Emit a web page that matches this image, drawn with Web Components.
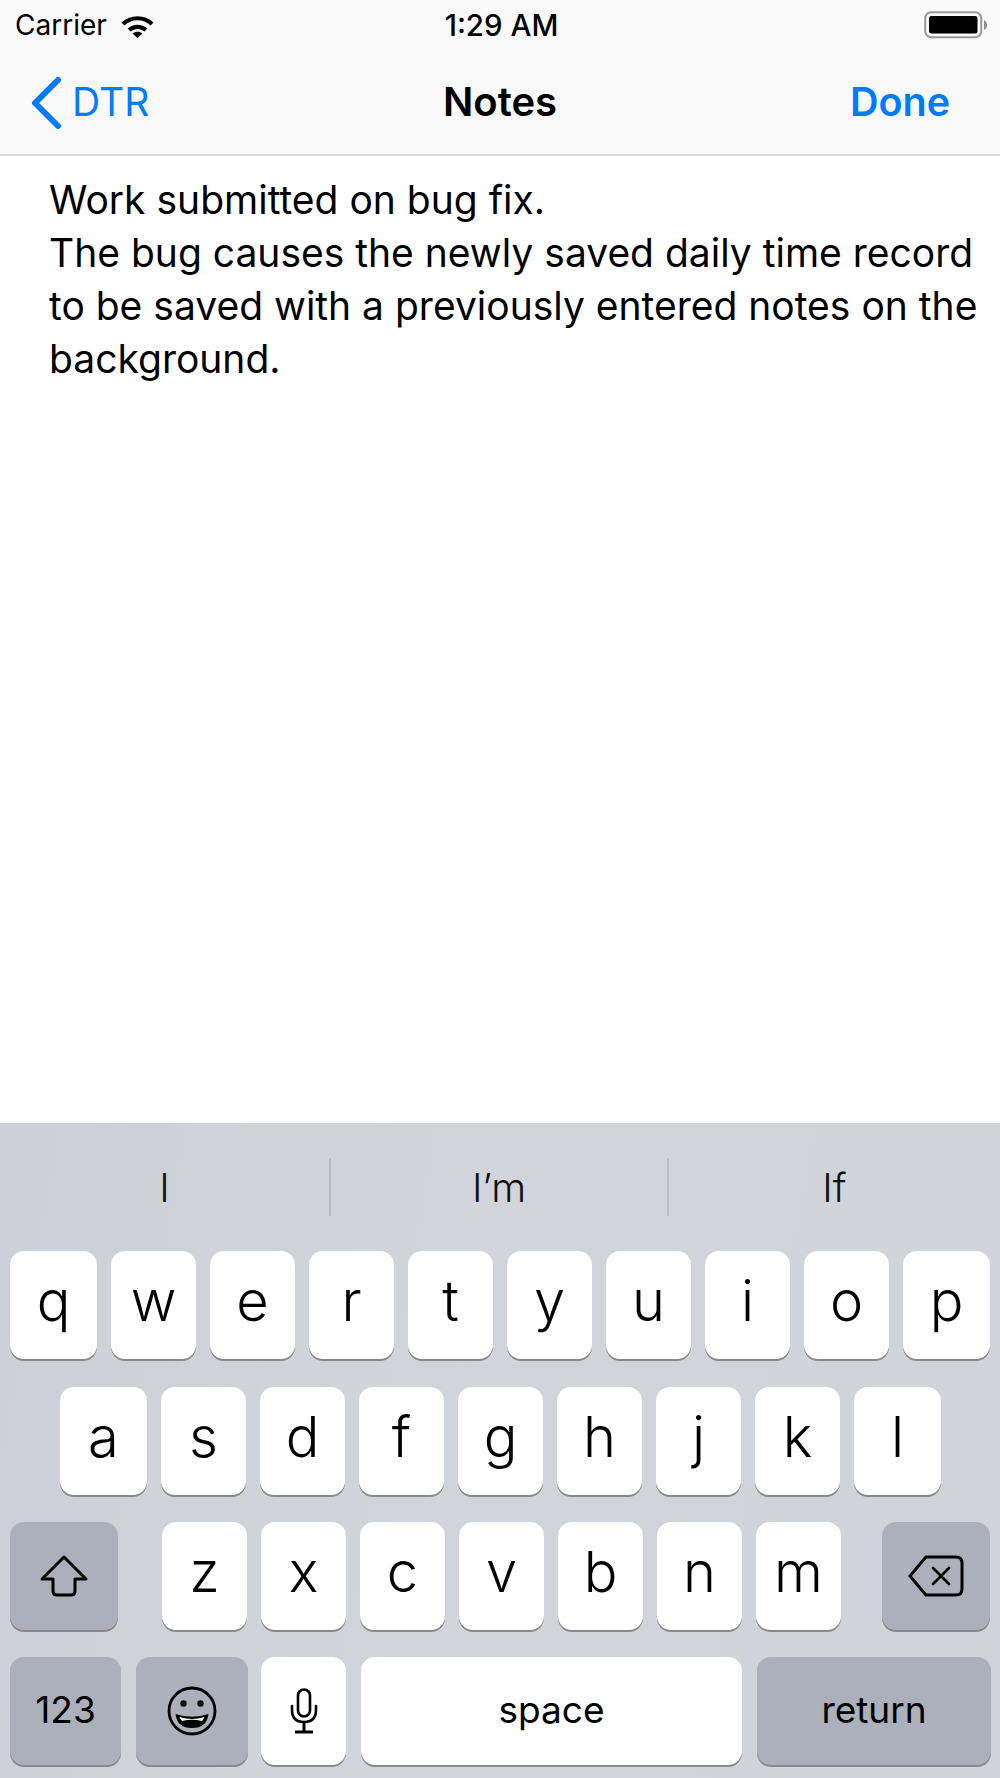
<!DOCTYPE html>
<html>
<head>
<meta charset="utf-8">
<title>Notes</title>
<style>
  html, body { margin: 0; padding: 0; background: #fff; }
  body { font-family: Inter, "Liberation Sans", sans-serif; color: #000; }
  notes-app { width: 1000px; height: 1778px; }
</style>
</head>
<body>
<notes-app>
  <ios-status-bar carrier="Carrier" time="1:29 AM"></ios-status-bar>
  <ios-nav-bar back="DTR" title="Notes" action="Done"></ios-nav-bar>
  <note-body>Work submitted on bug fix.<br>The bug causes the newly saved daily time record to be saved with a previously entered notes on the background.</note-body>
  <ios-keyboard></ios-keyboard>
</notes-app>

<script>
(function() {
  // small helper, every element gets an open shadow root with own css
  function define(name, css, html) {
    customElements.define(name, class extends HTMLElement {
      constructor() {
        super();
        this.attachShadow({ mode: 'open' });
        const body = typeof html === 'function' ? html(this) : html;
        this.shadowRoot.innerHTML = `<style>${css}</style>${body}`;
      }
    });
  }

  define('notes-app', `
    :host { display: flex; flex-direction: column; overflow: hidden; }
  `, `<slot></slot>`);

  define('ios-status-bar', `
    :host { display: block; height: 52px; background: #f9f9f9; }
    .bar { display: grid; grid-template-columns: 1fr auto 1fr; align-items: center; height: 50px; padding: 0 12px 0 15px; }
    .left { display: flex; align-items: center; gap: 13px; font-size: 28px; }
    .time { font-size: 29.5px; font-weight: 500; }
    .right { display: flex; justify-content: flex-end; }
    svg { display: block; }
  `, el => `
    <div class="bar">
      <div class="left">
        <span>${el.getAttribute('carrier')}</span>
        <svg width="35" height="25" viewBox="0 0 35 25">
          <path d="M1.5 9.5 C10.5 1 24.5 1 33.5 9.5 L30.6 12.6 C23.2 5.6 11.8 5.6 4.4 12.6 Z" fill="#000"/>
          <path d="M7.6 15.6 C13.2 10.4 21.8 10.4 27.4 15.6 L24.4 18.6 C20.4 15.2 14.6 15.2 10.6 18.6 Z" fill="#000"/>
          <path d="M12.6 20.4 C15.4 18.2 19.6 18.2 22.4 20.4 L17.5 25 Z" fill="#000"/>
        </svg>
      </div>
      <div class="time">${el.getAttribute('time')}</div>
      <div class="right">
        <svg width="64" height="28" viewBox="0 0 64 28">
          <rect x="1.2" y="1.2" width="56" height="25" rx="6" fill="none" stroke="#999" stroke-width="2"/>
          <rect x="5" y="5" width="48.5" height="17.5" rx="2.5" fill="#000"/>
          <path d="M60 9 C62.2 10 63 12 63 14 C63 16 62.2 18 60 19 Z" fill="#8e8e8e"/>
        </svg>
      </div>
    </div>
  `);

  define('ios-nav-bar', `
    :host { display: block; height: 102px; background: #f9f9f9; border-bottom: 2px solid #dcdcdc; }
    .bar { display: grid; grid-template-columns: 1fr auto 1fr; align-items: center; height: 100%; padding: 0 50px 3px 31px; box-sizing: border-box; font-size: 39px; }
    .back { display: flex; align-items: center; gap: 11px; color: #007aff; }
    .back svg { margin-top: 3px; }
    .title { font-weight: 600; font-size: 40px; margin-left: 19px; }
    .action { justify-self: end; color: #007aff; font-weight: 600; font-size: 39.5px; }
    svg { display: block; }
  `, el => `
    <div class="bar">
      <div class="back">
        <svg width="30" height="52" viewBox="0 0 30 52">
          <path d="M27 3 L4 26 L27 49" fill="none" stroke="#007aff" stroke-width="6" stroke-linecap="round" stroke-linejoin="round"/>
        </svg>
        <span>${el.getAttribute('back')}</span>
      </div>
      <div class="title">${el.getAttribute('title')}</div>
      <div class="action">${el.getAttribute('action')}</div>
    </div>
  `);

  define('note-body', `
    :host { display: block; flex: 1; background: #fff; padding: 17px 0 0 49px; font-size: 39px; line-height: 53px; }
  `, `<slot></slot>`);

  define('kb-key', `
    :host { display: flex; align-items: center; justify-content: center; box-sizing: border-box; height: 108px; width: var(--w, 85px); flex: none;
      background: #fff; border-radius: 14px; box-shadow: 0 2px 0 #87888c; font-size: 56px; font-weight: 300; padding-bottom: 9px; }
    :host([dark]) { background: #abb0bb; padding-bottom: 0; }
    :host([small]) { font-size: 37px; font-weight: 400; padding-bottom: 4px; }
    :host([icon]) { padding-bottom: 0; }
    ::slotted(svg) { display: block; }
  `, `<slot></slot>`);

  define('kb-row', `
    :host { display: flex; height: 110px; gap: 14px; }
    :host([top]) { margin-top: 25px; }
    :host([mid]) { margin-top: 26px; }
  `, `<slot></slot>`);

  const keys = (s, edge) => [...s].map((c, i) => {
    const w = edge && (i === 0 || i === s.length - 1) ? ' style="--w:87px"' : '';
    return `<kb-key${w}>${c}</kb-key>`;
  }).join('');

  define('ios-keyboard', `
    :host { display: block; height: 655px; box-sizing: border-box; background: linear-gradient(100deg, #cdd0d8 0%, #d1d4da 45%, #d0d3da 100%); }
    .suggest { display: grid; grid-template-columns: 331px 338px 331px; height: 128px; font-size: 40px; font-weight: 300; color: #111; }
    .suggest div { display: flex; align-items: center; justify-content: center; height: 58px; margin-top: 35px; border-right: 2px solid #b9bcc3; box-sizing: border-box; }
    .suggest div:last-child { border-right: 0; }
    .rows { padding: 0 10px; }
    .r2 { padding-left: 50px; padding-right: 49px; }
    .r3 { column-gap: 0; }
    .letters { display: flex; gap: 14px; margin-left: 44px; margin-right: 41px; }
    .r4 { gap: 0; }
    .r4 > * { margin-right: 15px; }
    .r4 > *:nth-child(2) { margin-right: 13px; }
    .r4 > *:last-child { margin-right: 0; }
  `, `
    <div class="suggest"><div>I</div><div>I’m</div><div>If</div></div>
    <div class="rows">
      <kb-row>${keys('qwertyuiop', true)}</kb-row>
      <kb-row class="r2" mid>${keys('asdfghjkl', true)}</kb-row>
      <kb-row class="r3" top>
        <kb-key dark style="--w:108px">
          <svg width="48" height="42" viewBox="0 0 48 42">
            <path d="M24 2 L46 24 L35 24 L35 36 Q35 40 31 40 L17 40 Q13 40 13 36 L13 24 L2 24 Z" fill="none" stroke="#000" stroke-width="3" stroke-linejoin="round"/>
          </svg>
        </kb-key>
        <div class="letters">${keys('zxcvbnm')}</div>
        <kb-key dark style="--w:108px">
          <svg width="56" height="42" viewBox="0 0 56 42">
            <path d="M18 2 L48 2 Q54 2 54 8 L54 34 Q54 40 48 40 L18 40 L2 21 Z" fill="none" stroke="#000" stroke-width="3" stroke-linejoin="round"/>
            <path d="M25 13 L41 29 M41 13 L25 29" stroke="#000" stroke-width="2.6" stroke-linecap="round"/>
          </svg>
        </kb-key>
      </kb-row>
      <kb-row class="r4" mid style="margin-top:25px">
        <kb-key dark small style="--w:111px">123</kb-key>
        <kb-key dark style="--w:112px">
          <svg width="50" height="50" viewBox="0 0 50 50">
            <circle cx="25" cy="25" r="23" fill="none" stroke="#000" stroke-width="2.8"/>
            <circle cx="16.5" cy="17.5" r="3.2" fill="#000"/>
            <circle cx="33.5" cy="17.5" r="3.2" fill="#000"/>
            <path d="M8.5 28 Q25 33.5 41.5 28 Q40 42 25 42 Q10 42 8.5 28 Z" fill="#000"/>
            <path d="M12.5 31 Q25 35 37.5 31 Q36 34 35 35 Q25 32.5 15 35 Q13.5 33.5 12.5 31 Z" fill="#fff"/>
          </svg>
        </kb-key>
        <kb-key icon>
          <svg width="28" height="46" viewBox="0 0 28 46">
            <rect x="8" y="1.5" width="12" height="27" rx="6" fill="none" stroke="#000" stroke-width="2.6"/>
            <path d="M2 18 L2 22 Q2 34 14 34 Q26 34 26 22 L26 18" fill="none" stroke="#000" stroke-width="2.6" stroke-linecap="round"/>
            <path d="M14 34 L14 43 M5 44 L23 44" stroke="#000" stroke-width="3"/>
          </svg>
        </kb-key>
        <kb-key small style="--w:381px">space</kb-key>
        <kb-key dark small style="--w:234px">return</kb-key>
      </kb-row>
    </div>
  `);
})();
</script>
</body>
</html>
